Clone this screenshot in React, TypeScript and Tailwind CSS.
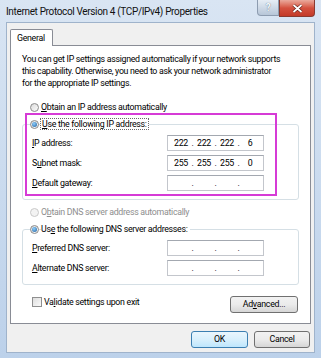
import React from "react";

function Radio({ checked, disabled }: { checked?: boolean; disabled?: boolean }) {
  return (
    <span
      className={`inline-flex w-[9px] h-[9px] rounded-full border items-center justify-center shrink-0 ${
        disabled
          ? "border-[#c9c9c9] bg-[#f3f3f3]"
          : "border-[#8b8b8b] bg-gradient-to-br from-[#dcdcdc] to-[#fbfbfb]"
      }`}
    >
      {checked && (
        <span className="w-[5px] h-[5px] rounded-full bg-[radial-gradient(circle_at_40%_35%,#8fd0ff,#1d5c9a)]" />
      )}
    </span>
  );
}

function IpField({ v }: { v: string[] }) {
  return (
    <div className="w-[97px] h-[16px] border border-[#c3c6cc] border-t-[#a3a8b0] bg-white flex items-center pl-[3px] leading-none">
      {[0, 1, 2, 3].map((i) => (
        <React.Fragment key={i}>
          <span className="w-[20px] text-center">{v[i] ?? ""}</span>
          {i < 3 && <span className="w-[3px] text-center">.</span>}
        </React.Fragment>
      ))}
    </div>
  );
}

function FieldRow({ label, v }: { label: React.ReactNode; v: string[] }) {
  return (
    <div className="flex items-center h-[16px]">
      <span className="w-[135px] ml-[9px] leading-none">{label}</span>
      <IpField v={v} />
    </div>
  );
}

function U({ children }: { children: React.ReactNode }) {
  return <span className="underline underline-offset-[1px]">{children}</span>;
}

function Btn({ children, w, primary }: { children: React.ReactNode; w: string; primary?: boolean }) {
  return (
    <div
      className={`${w} h-[17px] rounded-[3px] border flex items-center justify-center leading-none ${
        primary
          ? "border-[#3c7fb1] bg-gradient-to-b from-[#eaf6fd] via-[#d9f0fc] to-[#bee6fd]"
          : "border-[#707070] bg-gradient-to-b from-[#f2f2f2] via-[#ebebeb] to-[#d6d6d6]"
      }`}
    >
      {children}
    </div>
  );
}

export default function App() {
  return (
    <div className="w-[321px] h-[358px] bg-gradient-to-b from-[#d9e5f3] to-[#bcd1ea] flex flex-col overflow-hidden font-['Roboto','Noto_Sans',sans-serif] text-[8.8px] tracking-[-0.3px] text-black">
      {/* title bar */}
      <div className="h-[22px] flex items-start shrink-0">
        <span className="pl-[6px] pt-[5px] text-[10px] tracking-[-0.35px] leading-[14px] text-[#111]">
          Internet Protocol Version 4 (TCP/IPv4) Properties
        </span>
        <div className="ml-auto mr-[6px] flex items-start">
          <div className="w-[22px] h-[16px] rounded-bl-[4px] border border-t-0 border-[#8d9cb0] bg-gradient-to-b from-[#e6edf5] to-[#b7c6d8] flex items-center justify-center text-[10px] text-[#f4f8fc] font-bold leading-none [text-shadow:0_0_1px_#4a5a70]">
            ?
          </div>
          <div className="w-[36px] h-[17px] rounded-br-[4px] border border-t-0 border-[#8a3a30] bg-gradient-to-b from-[#e9a99c] via-[#d4513f] to-[#c33a28] flex items-center justify-center">
            <svg width="11" height="9" viewBox="0 0 11 9">
              <path d="M1.5 1 L9.5 8 M9.5 1 L1.5 8" stroke="#5a1a12" strokeWidth="3" />
              <path d="M1.5 1 L9.5 8 M9.5 1 L1.5 8" stroke="#ffffff" strokeWidth="1.8" />
            </svg>
          </div>
        </div>
      </div>

      {/* client area */}
      <div className="mx-[6px] h-[331px] bg-[#f0f0f0] border border-[#9fb3cb] px-[3px] pt-[6px] flex flex-col shrink-0">
        {/* tab */}
        <div className="flex">
          <div className="relative z-10 w-[43px] h-[17px] -mb-[1px] bg-white border border-b-0 border-[#898c95] rounded-t-[2px] flex items-center pl-[6px] leading-none">
            General
          </div>
        </div>
        {/* panel */}
        <div className="relative h-[279px] bg-white border border-[#898c95] flex flex-col">
          <div className="mt-[7px] ml-[11px] leading-[12px] whitespace-nowrap">
            You can get IP settings assigned automatically if your network supports
            <br />
            this capability. Otherwise, you need to ask your network administrator
            <br />
            for the appropriate IP settings.
          </div>

          <div className="mt-[12px] ml-[19px] h-[12px] flex items-center gap-[2px] leading-none">
            <Radio />
            <span>
              <U>O</U>btain an IP address automatically
            </span>
          </div>

          {/* IP group */}
          <div className="mt-[11px] ml-[11px] w-[277px] h-[76px] border border-[#d5dfe5] rounded-[3px] flex flex-col">
            <div className="-mt-[7px] ml-[7px] h-[12px] flex items-center gap-[1px] leading-none">
              <Radio checked />
              <span className="bg-white border border-dotted border-[#6a6a6a] px-[1px] h-[12px] flex items-center">
                <U>U</U>se the following IP address:
              </span>
            </div>
            <div className="mt-[5px] flex flex-col gap-[4px]">
              <FieldRow label={<><U>I</U>P address:</>} v={["222", "222", "222", "6"]} />
              <FieldRow label={<>S<U>u</U>bnet mask:</>} v={["255", "255", "255", "0"]} />
              <FieldRow label={<><U>D</U>efault gateway:</>} v={[]} />
            </div>
          </div>

          <div className="mt-[6px] ml-[19px] h-[12px] flex items-center gap-[2px] leading-none text-[#8e8e8e]">
            <Radio disabled />
            <span>
              O<U>b</U>tain DNS server address automatically
            </span>
          </div>

          {/* DNS group */}
          <div className="mt-[11px] ml-[11px] w-[277px] h-[56px] border border-[#d5dfe5] rounded-[3px] flex flex-col">
            <div className="-mt-[7px] ml-[7px] h-[12px] flex items-center gap-[2px] leading-none">
              <Radio checked />
              <span className="bg-white pr-[2px] h-[12px] flex items-center whitespace-pre">
                Us<U>e</U> the following DNS server addresses:
              </span>
            </div>
            <div className="mt-[5px] flex flex-col gap-[4px]">
              <FieldRow label={<><U>P</U>referred DNS server:</>} v={[]} />
              <FieldRow label={<><U>A</U>lternate DNS server:</>} v={[]} />
            </div>
          </div>

          {/* bottom row */}
          <div className="mt-[11px] flex items-start">
            <div className="mt-[1px] ml-[21px] h-[10px] flex items-center gap-[2px] leading-none">
              <span className="w-[10px] h-[10px] border border-[#8f8f8f] bg-gradient-to-br from-[#dedede] to-[#fafafa]" />
              <span>
                Va<U>l</U>idate settings upon exit
              </span>
            </div>
            <div className="ml-auto mr-[12px]">
              <Btn w="w-[68px]">
                Ad<U>v</U>anced...
              </Btn>
            </div>
          </div>

          {/* highlight annotation */}
          <div className="absolute left-[14px] top-[67px] w-[252px] h-[83px] border-2 border-[#d63bd6]" />
        </div>

        {/* dialog buttons */}
        <div className="mt-[7px] flex justify-end gap-[6px] pr-[1px]">
          <Btn w="w-[57px]" primary>
            OK
          </Btn>
          <Btn w="w-[56px]">Cancel</Btn>
        </div>
      </div>
    </div>
  );
}
